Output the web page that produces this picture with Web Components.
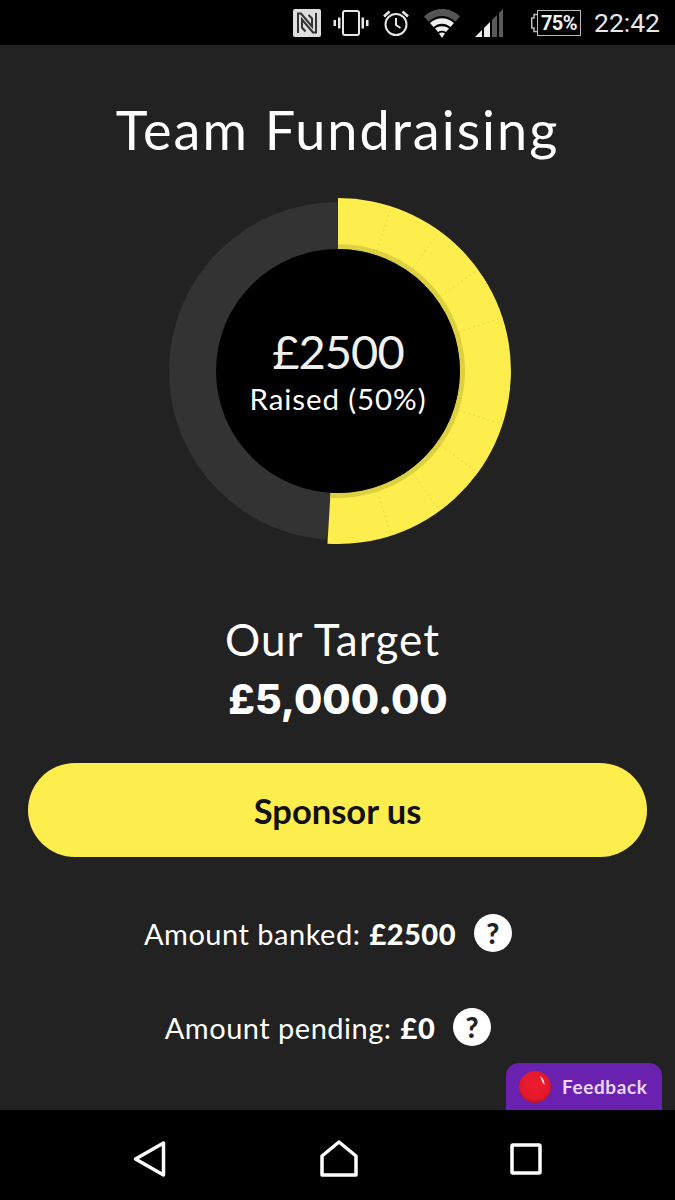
<!DOCTYPE html>
<html>
<head>
<meta charset="utf-8">
<title>Team Fundraising</title>
<style>
  html, body { margin: 0; padding: 0; background: #222; }
</style>
</head>
<body>
<fund-screen>
  <status-bar slot="top"></status-bar>
  <h-title>Team Fundraising</h-title>
  <donut-chart amount="£2500" label="Raised (50%)"></donut-chart>
  <target-block label="Our Target" value="£5,000.00"></target-block>
  <yellow-button>Sponsor us</yellow-button>
  <amount-row style="--row-top:57px" label="Amount banked:" value="£2500"></amount-row>
  <amount-row style="--row-top:56px" label="Amount pending:" value="£0"></amount-row>
  <feedback-tab slot="overlay">Feedback</feedback-tab>
  <nav-bar slot="bottom"></nav-bar>
</fund-screen>

<script>
// fonts used around the app
const BODY_FONT = '"Lato", "Liberation Sans", sans-serif';
const HEAVY_FONT = '"Inter", "Liberation Sans", sans-serif';

class FundScreen extends HTMLElement {
  constructor() {
    super();
    this.attachShadow({ mode: "open" });
  }

  connectedCallback() {
    this.shadowRoot.innerHTML = `
      <style>
        :host {
          display: flex;
          flex-direction: column;
          position: relative;
          width: 675px;
          height: 1200px;
          overflow: hidden;
          background: #222;
          color: #fff;
          font-family: ${BODY_FONT};
        }
        main {
          flex: 1;
          display: flex;
          flex-direction: column;
          align-items: center;
          min-height: 0;
        }
        .overlay {
          position: absolute;
          right: 13px;
          bottom: 90px;
        }
      </style>
      <slot name="top"></slot>
      <main><slot></slot></main>
      <div class="overlay"><slot name="overlay"></slot></div>
      <slot name="bottom"></slot>
    `;
  }
}

class StatusBar extends HTMLElement {
  constructor() {
    super();
    this.attachShadow({ mode: "open" });
  }

  connectedCallback() {
    this.shadowRoot.innerHTML = `
      <style>
        :host {
          display: flex;
          align-items: center;
          justify-content: flex-end;
          height: 45px;
          background: #000;
          padding-right: 15px;
          box-sizing: border-box;
          color: #e6e6e6;
        }
        svg { display: block; flex: none; }
        .batt {
          display: flex;
          align-items: center;
          justify-content: center;
          box-sizing: border-box;
          width: 44px;
          height: 26px;
          border: 1.5px solid #bbb;
          font: 700 20px "Roboto", "Liberation Sans", sans-serif;
          letter-spacing: -0.5px;
          color: #f2f2f2;
        }
        .time {
          margin-left: 13px;
          font: 400 26.5px "Roboto", "Liberation Sans", sans-serif;
          color: #e8e8e8;
        }
      </style>
      <svg width="28" height="28" viewBox="0 0 28 28">
        <rect x="0" y="0" width="28" height="28" rx="2" fill="#dedede"/>
        <path d="M5 24V4.500h3l11 13V9.500L15.500 6" fill="none" stroke="#333" stroke-width="2"/>
        <path d="M23 4V23.500h-3L9 10.500v8l3.500 4" fill="none" stroke="#333" stroke-width="2"/>
      </svg>
      <svg width="36" height="26" viewBox="0 0 36 26" style="margin-left:12px">
        <rect x="10" y="1" width="16" height="24" rx="2" fill="none" stroke="#e6e6e6" stroke-width="2"/>
        <rect x="5" y="7.5" width="2.5" height="11" fill="#e6e6e6"/>
        <rect x="28.5" y="7.5" width="2.5" height="11" fill="#e6e6e6"/>
        <rect x="0.5" y="10" width="2.5" height="6" fill="#e6e6e6"/>
        <rect x="33" y="10" width="2.5" height="6" fill="#e6e6e6"/>
      </svg>
      <svg width="30" height="30" viewBox="0 0 30 30" style="margin-left:12px">
        <circle cx="15" cy="16.5" r="10.5" fill="none" stroke="#e6e6e6" stroke-width="2"/>
        <path d="M15 10v7l4.5 3" fill="none" stroke="#e6e6e6" stroke-width="2"/>
        <path d="M3 8.5 8.5 3.5M27 8.5 21.5 3.5" stroke="#e6e6e6" stroke-width="2.6"/>
      </svg>
      <svg width="36" height="30" viewBox="0 0 36 30" style="margin-left:13px">
        <path d="M0 8.5C10-1.5 26-1.5 36 8.5L31.5 13.5C23.500 6 12.500 6 4.500 13.5z" fill="#555"/>
        <path d="M6 15C13 8.500 23 8.500 30 15L26.500 19C21.500 14.500 14.500 14.500 9.500 19z" fill="#eee"/>
        <path d="M11 20.500C15 17.500 21 17.500 25 20.500L22 24C19.500 22.200 16.500 22.200 14 24z" fill="#eee"/>
        <path d="M15 25.500C17 24 19 24 21 25.500L18 30z" fill="#eee"/>
      </svg>
      <svg width="28" height="28" viewBox="0 0 28 28" style="margin-left:15px">
        <path d="M0 28 7 21V28z" fill="#eee"/>
        <path d="M9 19 15 13V28H9z" fill="#eee"/>
        <path d="M17 11 22 6V28H17z" fill="#5a5a5a"/>
        <path d="M24 4 28 0V28H24z" fill="#5a5a5a"/>
      </svg>
      <svg width="6" height="26" viewBox="0 0 6 26" style="margin-left:28px">
        <path d="M6 4.500H3V8H0.750V18H3V21.500H6" fill="none" stroke="#bbb" stroke-width="1.500"/>
      </svg>
      <div class="batt">75%</div>
      <div class="time">22:42</div>
    `;
  }
}

class HTitle extends HTMLElement {
  constructor() {
    super();
    this.attachShadow({ mode: "open" });
  }

  connectedCallback() {
    this.shadowRoot.innerHTML = `
      <style>
        :host {
          display: block;
          margin-top: 51px;
          font-size: 54px;
          line-height: 68px;
          font-weight: 400;
          letter-spacing: 2px;
          white-space: nowrap;
        }
      </style>
      <slot></slot>
    `;
  }
}

class DonutChart extends HTMLElement {
  constructor() {
    super();
    this.attachShadow({ mode: "open" });
  }

  connectedCallback() {
    const cx = 175, cy = 175;
    const polar = (r, deg) => {
      const a = (deg - 90) * Math.PI / 180;
      return [(cx + r * Math.cos(a)).toFixed(2), (cy + r * Math.sin(a)).toFixed(2)];
    };
    // ring slice from 12 o'clock round to "end" degrees
    const arc = (r, r0, end) => {
      const [ax, ay] = polar(r, 0), [bx, by] = polar(r, end);
      const [ex, ey] = polar(r0, end), [dx, dy] = polar(r0, 0);
      const big = end > 180 ? 1 : 0;
      return `M${ax} ${ay}A${r} ${r} 0 ${big} 1 ${bx} ${by}L${ex} ${ey}A${r0} ${r0} 0 ${big} 0 ${dx} ${dy}z`;
    };
    let ticks = "";
    for (let deg = 18; deg < 180; deg += 18) {
      if (deg === 90) continue;
      const [x1, y1] = polar(127, deg), [x2, y2] = polar(172, deg);
      ticks += `<line x1="${x1}" y1="${y1}" x2="${x2}" y2="${y2}"/>`;
    }
    this.shadowRoot.innerHTML = `
      <style>
        :host {
          display: grid;
          width: 350px;
          height: 350px;
          margin-top: 32px;
          margin-left: 1px;
          justify-items: center;
          align-items: center;
        }
        svg, .center { grid-area: 1 / 1; }
        svg { display: block; }
        .center {
          display: flex;
          flex-direction: column;
          align-items: center;
        }
        .amount {
          font-size: 47px;
          line-height: 50px;
          color: #f0f0f0;
          letter-spacing: -1px;
        }
        .label {
          font-size: 29.5px;
          line-height: 36px;
          letter-spacing: 0.9px;
          margin-top: 5px;
        }
      </style>
      <svg width="350" height="350" viewBox="0 0 350 350">
        <circle cx="175" cy="175" r="169" fill="#333"/>
        <path d="${arc(173, 122, 183.5)}" fill="#fdee4e"/>
        <path d="${arc(127, 122, 183.5)}" fill="#ddd142"/>
        <g stroke="#e6d846" stroke-width="1" stroke-dasharray="2 3">${ticks}</g>
        <circle cx="175" cy="175" r="122" fill="#000"/>
      </svg>
      <div class="center">
        <div class="amount">${this.getAttribute("amount")}</div>
        <div class="label">${this.getAttribute("label")}</div>
      </div>
    `;
  }
}

class TargetBlock extends HTMLElement {
  constructor() {
    super();
    this.attachShadow({ mode: "open" });
  }

  connectedCallback() {
    this.shadowRoot.innerHTML = `
      <style>
        :host {
          display: flex;
          flex-direction: column;
          align-items: center;
          margin-top: 66px;
          margin-right: 10px;
        }
        .label {
          font-size: 44px;
          line-height: 54px;
          letter-spacing: 1.1px;
        }
        .value {
          font-family: ${HEAVY_FONT};
          font-size: 41px;
          line-height: 56px;
          font-weight: 800;
          margin-top: 5px;
          margin-left: 11px;
        }
      </style>
      <div class="label">${this.getAttribute("label")}</div>
      <div class="value">${this.getAttribute("value")}</div>
    `;
  }
}

class YellowButton extends HTMLElement {
  constructor() {
    super();
    this.attachShadow({ mode: "open" });
  }

  connectedCallback() {
    this.shadowRoot.innerHTML = `
      <style>
        :host {
          display: flex;
          align-items: center;
          justify-content: center;
          width: 619px;
          height: 94px;
          margin-top: 36px;
          border-radius: 47px;
          background: #fdee4e;
          color: #111;
          font-size: 34.5px;
          font-weight: 700;
        }
      </style>
      <slot></slot>
    `;
  }
}

class AmountRow extends HTMLElement {
  constructor() {
    super();
    this.attachShadow({ mode: "open" });
  }

  connectedCallback() {
    this.shadowRoot.innerHTML = `
      <style>
        :host {
          display: flex;
          align-items: center;
          margin-top: var(--row-top, 56px);
          margin-right: 19px;
          height: 38px;
          font-size: 29px;
          letter-spacing: 0.5px;
          white-space: nowrap;
        }
        b { font-weight: 900; margin-left: 9px; }
        .help {
          display: flex;
          align-items: center;
          justify-content: center;
          width: 38px;
          height: 38px;
          margin-left: 18px;
          border-radius: 50%;
          background: #fff;
          color: #222;
          font-size: 28px;
          font-weight: 900;
        }
      </style>
      <span>${this.getAttribute("label")}</span>
      <b>${this.getAttribute("value")}</b>
      <span class="help">?</span>
    `;
  }
}

class FeedbackTab extends HTMLElement {
  constructor() {
    super();
    this.attachShadow({ mode: "open" });
  }

  connectedCallback() {
    this.shadowRoot.innerHTML = `
      <style>
        :host {
          display: flex;
          align-items: center;
          box-sizing: border-box;
          width: 156px;
          height: 47px;
          padding: 0 0 0 13px;
          border-radius: 13px 13px 0 0;
          background: #6b21b0;
          color: #e8d8f5;
          font-size: 19px;
          font-weight: 700;
          letter-spacing: 0.6px;
        }
        svg { display: block; margin-right: 11px; flex: none; }
      </style>
      <svg width="32" height="32" viewBox="0 0 32 32">
        <defs>
          <radialGradient id="ball" cx="50%" cy="45%" r="55%">
            <stop offset="0%" stop-color="#ee1c2e"/>
            <stop offset="80%" stop-color="#e3192b"/>
            <stop offset="100%" stop-color="#b5142a"/>
          </radialGradient>
        </defs>
        <circle cx="16" cy="16" r="16" fill="url(#ball)"/>
        <path d="M21 5c3 2 4.500 5 4.500 9-1.500-1-3-5-4.500-9z" fill="#fbe3e6"/>
      </svg>
      <slot></slot>
    `;
  }
}

class NavBar extends HTMLElement {
  constructor() {
    super();
    this.attachShadow({ mode: "open" });
  }

  connectedCallback() {
    this.shadowRoot.innerHTML = `
      <style>
        :host {
          display: flex;
          align-items: center;
          justify-content: space-between;
          box-sizing: border-box;
          height: 90px;
          padding: 7px 133px 0 133px;
          background: #000;
        }
        svg { display: block; fill: none; stroke: #fff; stroke-width: 3.5; stroke-linejoin: round; }
      </style>
      <svg width="34" height="38" viewBox="0 0 34 38">
        <path d="M2.500 19 30.500 3V35z"/>
      </svg>
      <svg width="38" height="38" viewBox="0 0 38 38">
        <path d="M2 16 19 2 36 16V35H2z"/>
      </svg>
      <svg width="32" height="32" viewBox="0 0 32 32">
        <rect x="2" y="2" width="28" height="28" rx="1"/>
      </svg>
    `;
  }
}

customElements.define("fund-screen", FundScreen);
customElements.define("status-bar", StatusBar);
customElements.define("h-title", HTitle);
customElements.define("donut-chart", DonutChart);
customElements.define("target-block", TargetBlock);
customElements.define("yellow-button", YellowButton);
customElements.define("amount-row", AmountRow);
customElements.define("feedback-tab", FeedbackTab);
customElements.define("nav-bar", NavBar);
</script>
</body>
</html>
